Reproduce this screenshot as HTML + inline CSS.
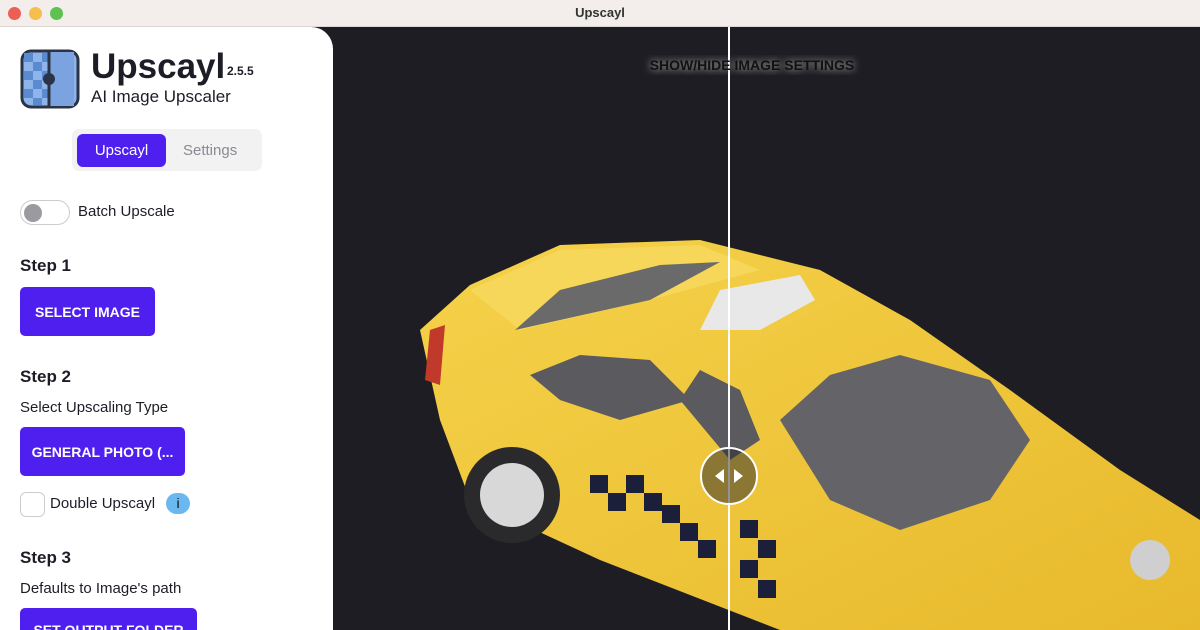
<!DOCTYPE html>
<html><head><meta charset="utf-8">
<style>
*{margin:0;padding:0;box-sizing:border-box}
html,body{width:1200px;height:630px;overflow:hidden}
body{background:#1e1d23;font-family:"Liberation Sans",sans-serif;position:relative}
.tb{position:absolute;left:0;top:0;width:1200px;height:27px;background:#f3eeeb;border-bottom:1px solid #ddd6d2;text-align:center;font-size:13px;font-weight:bold;line-height:26px;color:#333}
.dot{position:absolute;top:7px;width:13px;height:13px;border-radius:50%}
.side{position:absolute;left:0;top:27px;width:333px;height:603px;background:#fff;border-top-right-radius:22px;overflow:hidden}
.t{position:absolute;color:#1d1d27;white-space:nowrap}
.btn{position:absolute;background:#4f1ff0;color:#fff;font-weight:bold;font-size:14px;border-radius:5px;display:flex;align-items:center;justify-content:center;white-space:nowrap}
</style></head><body>
<div class="tb">Upscayl
<div class="dot" style="left:8px;background:#ec5f57"></div>
<div class="dot" style="left:29px;background:#f5bf4f"></div>
<div class="dot" style="left:50px;background:#5dc24f"></div>
</div>
<svg style="position:absolute;left:333px;top:27px" width="867" height="603" viewBox="333 27 867 603">
<defs>
<linearGradient id="y" x1="0" y1="0" x2="1" y2="1"><stop offset="0" stop-color="#f5d24a"/><stop offset="1" stop-color="#e8b92c"/></linearGradient>
<filter id="g"><feGaussianBlur stdDeviation="4"/></filter>
</defs>
<polygon points="440,420 420,330 470,285 560,245 700,240 820,270 910,320 1010,390 1120,470 1200,520 1200,630 780,630 600,560 470,500" fill="url(#y)"/>
<polygon points="470,290 560,250 700,245 760,270 650,300 520,330" fill="#f6d75a"/>
<polygon points="515,330 560,290 660,265 720,262 650,300" fill="#6b6a6a"/>
<polygon points="530,375 580,355 650,360 690,400 620,420 560,400" fill="#5b5a5e"/>
<polygon points="680,400 700,370 740,390 760,440 730,460" fill="#5b5a5e"/>
<polygon points="780,420 830,375 900,355 990,380 1030,440 990,500 900,530 830,500" fill="#646368"/>
<polygon points="700,330 720,290 800,275 815,300 760,330" fill="#e8e8e8"/>
<polygon points="430,330 445,325 440,385 425,380" fill="#c0392b"/>
<circle cx="512" cy="495" r="48" fill="#2a2a2c"/><circle cx="512" cy="495" r="32" fill="#d8d8d8"/>
<g fill="#1c1f3a">
<rect x="590" y="475" width="18" height="18"/><rect x="608" y="493" width="18" height="18"/><rect x="626" y="475" width="18" height="18"/><rect x="644" y="493" width="18" height="18"/><rect x="662" y="505" width="18" height="18"/><rect x="680" y="523" width="18" height="18"/><rect x="698" y="540" width="18" height="18"/><rect x="740" y="520" width="18" height="18"/><rect x="758" y="540" width="18" height="18"/><rect x="740" y="560" width="18" height="18"/><rect x="758" y="580" width="18" height="18"/>
</g>
<circle cx="1150" cy="560" r="20" fill="#cfcfcf"/>
<line x1="729" y1="27" x2="729" y2="630" stroke="#fff" stroke-width="2"/>
<circle cx="729" cy="476" r="28" fill="rgba(40,40,45,.5)" stroke="#fff" stroke-width="2"/>
<polygon points="724,469 724,483 715,476" fill="#fff"/><polygon points="734,469 734,483 743,476" fill="#fff"/>
<text x="752" y="70" text-anchor="middle" font-family="Liberation Sans" font-weight="bold" font-size="14" fill="#bbb" filter="url(#g)">SHOW/HIDE IMAGE SETTINGS</text>
<text x="752" y="70" text-anchor="middle" font-family="Liberation Sans" font-weight="bold" font-size="14" fill="#111">SHOW/HIDE IMAGE SETTINGS</text>
</svg>
<div class="side">
<svg style="position:absolute;left:20px;top:22px" width="60" height="60" viewBox="0 0 60 60">
<rect x="2" y="2" width="56" height="56" rx="9" fill="#8fb4ea" stroke="#2a3446" stroke-width="3"/>
<g fill="#5a8ad0"><rect x="4" y="4" width="9" height="9"/><rect x="13" y="13" width="9" height="9"/><rect x="4" y="22" width="9" height="9"/><rect x="13" y="31" width="9" height="9"/><rect x="4" y="40" width="9" height="9"/><rect x="13" y="49" width="9" height="7"/><rect x="22" y="4" width="7" height="9"/><rect x="22" y="22" width="7" height="9"/><rect x="22" y="40" width="7" height="9"/></g>
<rect x="29" y="3" width="25" height="54" fill="#7aa3df"/>
<line x1="29" y1="3" x2="29" y2="57" stroke="#2a3446" stroke-width="3"/>
<circle cx="29" cy="30" r="6" fill="#2a3446"/>
</svg>
<div class="t" style="left:91px;top:20px;font-size:35px;font-weight:bold">Upscayl</div>
<div class="t" style="left:227px;top:37px;font-size:12px;font-weight:bold">2.5.5</div>
<div class="t" style="left:91px;top:60px;font-size:17px">AI Image Upscaler</div>
<div style="position:absolute;left:72px;top:102px;width:190px;height:42px;background:#f2f2f2;border-radius:7px"></div>
<div class="btn" style="left:77px;top:107px;width:89px;height:33px;font-weight:normal;font-size:15px;border-radius:6px">Upscayl</div>
<div class="t" style="left:183px;top:115px;font-size:15px;color:#8a8a92">Settings</div>
<div style="position:absolute;left:20px;top:173px;width:50px;height:25px;border:1.5px solid #ccc;border-radius:13px"></div>
<div style="position:absolute;left:24px;top:177px;width:18px;height:18px;border-radius:50%;background:#9a9aa0"></div>
<div class="t" style="left:78px;top:176px;font-size:15px">Batch Upscale</div>
<div class="t" style="left:20px;top:229px;font-size:17px;font-weight:bold">Step 1</div>
<div class="btn" style="left:20px;top:260px;width:135px;height:49px">SELECT IMAGE</div>
<div class="t" style="left:20px;top:340px;font-size:17px;font-weight:bold">Step 2</div>
<div class="t" style="left:20px;top:372px;font-size:15px">Select Upscaling Type</div>
<div class="btn" style="left:20px;top:400px;width:165px;height:49px">GENERAL PHOTO (...</div>
<div style="position:absolute;left:20px;top:465px;width:25px;height:25px;border:1.5px solid #ccc;border-radius:6px"></div>
<div class="t" style="left:50px;top:468px;font-size:15px">Double Upscayl</div>
<div style="position:absolute;left:166px;top:466px;width:24px;height:21px;border-radius:11px;background:#6ab8f0;text-align:center;font-size:14px;line-height:21px;color:#111">i</div>
<div class="t" style="left:20px;top:521px;font-size:17px;font-weight:bold">Step 3</div>
<div class="t" style="left:20px;top:553px;font-size:15px">Defaults to Image's path</div>
<div class="btn" style="left:20px;top:581px;width:177px;height:49px;align-items:flex-start;padding-top:14px">SET OUTPUT FOLDER</div>
</div>
</body></html>
